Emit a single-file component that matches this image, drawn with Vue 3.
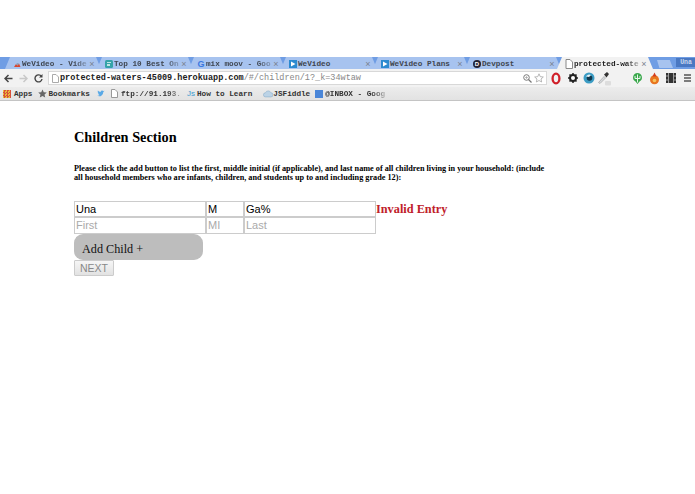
<script setup>
const tabs = [
  { title: 'WeVideo - Vide', icon: 'wv', fade: true },
  { title: 'Top 10 Best On', icon: 'top', fade: true },
  { title: 'mix moov - Goo', icon: 'g', fade: true },
  { title: 'WeVideo', icon: 'play', fade: false },
  { title: 'WeVideo Plans', icon: 'play', fade: false },
  { title: 'Devpost', icon: 'dev', fade: false },
]
</script>

<template>
  <div class="page">
    <header class="chrome">
      <div class="tabstrip">
        <div v-for="(t, i) in tabs" :key="i" class="tab">
          <svg v-if="t.icon === 'play'" class="fav" width="8" height="8" viewBox="0 0 8 8"><rect width="8" height="8" fill="#2c8ad0"/><path d="M2 1.500L6.500 4 2 6.500z" fill="#fff"/></svg>
          <svg v-else-if="t.icon === 'wv'" class="fav" width="8" height="8" viewBox="0 0 8 8"><path d="M1 7L3 4l1.500 1.500L6 3.500 7.500 7z" fill="#d9472f"/><path d="M3 4l1.500-1L6 3.500 4.500 5.500z" fill="#8aa0b8"/></svg>
          <svg v-else-if="t.icon === 'top'" class="fav" width="8" height="8" viewBox="0 0 8 8"><rect width="8" height="8" rx="1.500" fill="#35a3a8"/><path d="M2 2h4v1H2zM2 4h3v2H2z" fill="#bfe6e6"/></svg>
          <span v-else-if="t.icon === 'g'" class="fav g">G</span>
          <span v-else class="fav dev">D</span>
          <span class="tabtitle" :class="{ fade: t.fade }">{{ t.title }}</span>
          <span class="x">×</span>
        </div>
        <div class="tab active">
          <svg class="fav" width="8" height="10" viewBox="0 0 8 10"><path d="M1 .5h4l2.500 2.500v6.500H1z" fill="#fff" stroke="#888"/></svg>
          <span class="tabtitle fade">protected-wate</span>
          <span class="x">×</span>
        </div>
        <div class="newtab"></div>
        <div class="user">Una</div>
      </div>
      <div class="toolbar">
        <svg class="nav" width="9" height="9" viewBox="0 0 9 9"><path d="M8.500 4.500H1.500M4.500 1L1 4.500 4.500 8" fill="none" stroke="#444" stroke-width="1.500"/></svg>
        <svg class="nav" width="9" height="9" viewBox="0 0 9 9"><path d="M.5 4.500h7M4.500 1L8 4.500 4.500 8" fill="none" stroke="#c8c8c8" stroke-width="1.500"/></svg>
        <svg class="nav" width="9" height="9" viewBox="0 0 9 9"><path d="M7.500 2.500A3.500 3.500 0 1 0 8 5" fill="none" stroke="#444" stroke-width="1.400"/><path d="M8.500 0v3.500H5z" fill="#444"/></svg>
        <div class="omnibox">
          <svg width="7" height="9" viewBox="0 0 7 9"><path d="M.5.500h3.500L6.500 3v5.500H.5z" fill="#fff" stroke="#aaa"/></svg>
          <span class="url"><b>protected-waters-45009.herokuapp.com</b>/#/children/1?_k=34wtaw</span>
          <span class="grow"></span>
          <svg width="9" height="9" viewBox="0 0 9 9"><circle cx="3.500" cy="3.500" r="2.800" fill="none" stroke="#777"/><path d="M5.500 5.500L8.500 8.500" stroke="#777" stroke-width="1.300"/><path d="M2 3.500h3M3.500 2v3" stroke="#999" stroke-width=".6"/></svg>
          <svg class="star" width="10" height="10" viewBox="0 0 12 12"><path d="M6 1l1.500 3.400 3.700.4-2.800 2.400.8 3.600L6 9l-3.200 1.800.8-3.600L.8 4.800l3.700-.4z" fill="#fff" stroke="#aaa"/></svg>
        </div>
        <div class="exts">
          <svg class="e-opera" width="12" height="13" viewBox="0 0 12 13"><ellipse cx="6" cy="6.500" rx="3.400" ry="4.800" fill="none" stroke="#d0202a" stroke-width="2.300"/></svg>
          <svg class="e-gear" width="12" height="12" viewBox="0 0 12 12"><path d="M6 1v10M1 6h10M2.500 2.500l7 7M9.500 2.500l-7 7" stroke="#222" stroke-width="1.500"/><circle cx="6" cy="6" r="3" fill="#fff" stroke="#222" stroke-width="2"/></svg>
          <svg class="e-eye" width="12" height="12" viewBox="0 0 12 12"><circle cx="6" cy="6" r="5.500" fill="#3b9cc4"/><circle cx="6.500" cy="6" r="2.800" fill="#12384c"/><path d="M3 4.500a3.500 3.500 0 0 1 5-1.500l-2 2z" fill="#e6f4fa"/></svg>
          <svg class="e-drop" width="15" height="15" viewBox="0 0 15 15"><path d="M1.500 11.500L7 5.500l1.500 1.500-5.500 5.500z" fill="#d8dbde" stroke="#999" stroke-width=".6"/><path d="M7 3.500l3-2.500 2 2-2.500 3.500z" fill="#333"/><rect x="8" y="10" width="6" height="4.500" rx="1" fill="#ddd"/></svg>
          <svg class="e-green" width="11" height="13" viewBox="0 0 11 13"><path d="M5.500 1a4.500 4.500 0 0 1 2 8.500L5.500 12l-2-2.500A4.500 4.500 0 0 1 5.500 1z" fill="#3aa84c"/><path d="M5.500 2.500v8M3 4v2.500h5V4" fill="none" stroke="#e8f6ea"/></svg>
          <svg class="e-fire" width="11" height="13" viewBox="0 0 11 13"><circle cx="5.500" cy="7.800" r="4.500" fill="#e8741f"/><path d="M5.500 .5l2 4h-4z" fill="#d33a1c"/><circle cx="5.500" cy="8.500" r="1.800" fill="#f6c35a"/></svg>
          <svg class="e-film" width="12" height="12" viewBox="0 0 12 12"><rect x="1" y="1" width="10" height="10" fill="#333"/><path d="M3.500 1v10M8.500 1v10M1 4h2M1 8h2M9 4h2M9 8h2" stroke="#bbb" stroke-width=".8"/></svg>
          <svg class="e-menu" width="9" height="10" viewBox="0 0 9 10"><path d="M1 2h7M1 5h7M1 8h7" stroke="#555" stroke-width="1.300"/></svg>
        </div>
      </div>
      <div class="bookmarks">
        <i class="grid"></i><span class="b-apps">Apps</span>
        <svg class="b-star" width="9" height="9" viewBox="0 0 12 12"><path d="M6 .5l1.700 3.700 4 .4-3 2.700.9 4L6 9.200l-3.600 2.100.9-4-3-2.700 4-.4z" fill="#666"/></svg><span class="b-marks">Bookmarks</span>
        <svg class="b-tw" width="8" height="7" viewBox="0 0 10 9"><path d="M0 7.500c3 1.500 7.500.5 8-5l1.500-1.500-1.500.3C7 0 5 .3 4.800 2.300 3 2.300 1.700 1.200 1 .5.500 2 1 3 1.800 3.500L.8 3.300c.1 1 .7 1.700 1.700 2l-.9.100c.3.700 1 1 1.700 1.100C2.500 7.300 1.300 7.600 0 7.500z" fill="#5aa9e6"/></svg>
        <svg class="b-doc" width="7" height="9" viewBox="0 0 7 9"><path d="M.5.500h3.500L6.500 3v5.500H.5z" fill="#fff" stroke="#999"/></svg><span class="b-ftp fade">ftp://91.193.</span>
        <span class="js">Js</span><span class="b-how">How to Learn</span>
        <svg class="b-cloud" width="10" height="8" viewBox="0 0 12 9"><path d="M3 8a2.500 2.500 0 0 1 0-5 3.500 3.500 0 0 1 6.500 0 2.500 2.500 0 0 1 0 5z" fill="#bcd3e6" stroke="#7fa6c6" stroke-width=".6"/></svg><span class="b-fid">JSFiddle</span>
        <i class="mail"></i><span class="b-inbox fade">@INBOX - Goog</span>
      </div>
    </header>

    <main class="content">
      <h2>Children Section</h2>
      <h5>Please click the add button to list the first, middle initial (if applicable), and last name of all children living in your household: (include all household members who are infants, children, and students up to and including grade 12):</h5>
      <div class="row row-one">
        <input class="first" value="Una" />
        <input class="mi" value="M" />
        <input class="last" value="Ga%" />
        <span class="err">Invalid Entry</span>
      </div>
      <div class="row row-two">
        <input class="first" placeholder="First" />
        <input class="mi" placeholder="MI" />
        <input class="last" placeholder="Last" />
      </div>
      <button class="add">Add Child +</button>
      <button class="next">NEXT</button>
    </main>
  </div>
</template>

<style>
html, body { margin: 0; background: #fff; }
</style>

<style scoped>
.page { width: 695px; height: 494px; overflow: hidden; background: #fff; padding-top: 57px; box-sizing: border-box; }
.chrome { font-family: "Liberation Mono", monospace; font-weight: bold; color: #333; }
.tabstrip { height: 12px; background: #6f9de4; display: flex; padding-left: 5px; overflow: hidden; }
.tab { width: 96px; height: 12px; margin-right: -4px; box-sizing: border-box; padding: 1px 6px 0 8px; display: flex; align-items: center; gap: 1px; background: #a7c3ef; font-size: 7.700px; flex: none; color: #3f4650; clip-path: polygon(5px 0, calc(100% - 5px) 0, 100% 100%, 0 100%); }
.tab.active { background: #f2f2f2; color: #222; }
.tabtitle { flex: 1; white-space: nowrap; }
.fade { -webkit-mask-image: linear-gradient(to right, #000 78%, rgba(0,0,0,.25)); mask-image: linear-gradient(to right, #000 78%, rgba(0,0,0,.25)); }
.x { font-family: "Liberation Sans", sans-serif; font-size: 9px; color: #7a828e; font-weight: normal; width: 6px; text-align: center; }
.fav { width: 8px; height: 8px; flex: none; }
.active .fav { height: 10px; }
.g { font: bold 9px/8px "Liberation Sans", sans-serif; color: #3a78e0; text-align: center; }
.dev { font: bold 6px/8px "Liberation Sans", sans-serif; text-align: center; background: #223; color: #fff; border-radius: 50%; }
.newtab { width: 16px; height: 8px; margin: 3px 0 0 8px; background: #a7c3ef; flex: none; clip-path: polygon(0 0, 80% 0, 100% 100%, 15% 100%); }
.user { width: 20px; height: 9px; margin: 1px 0 0 3px; background: #4a78c2; color: #c9d8ef; font-size: 6.500px; line-height: 9px; text-align: center; flex: none; }
.toolbar { height: 18px; background: #f2f2f2; display: flex; align-items: center; padding-left: 4px; }
.nav { margin-right: 6px; flex: none; }
.omnibox { width: 499px; height: 14px; margin-left: -1px; background: #fff; border: 1px solid #d8d8d8; box-sizing: border-box; display: flex; align-items: center; padding: 0 2px 0 3px; flex: none; }
.url { font-size: 8.500px; font-weight: normal; color: #888; margin-left: 1px; white-space: nowrap; }
.url b { color: #222; }
.grow { flex: 1; }
.star { margin-left: 2px; }
.exts { display: flex; align-items: center; flex: 1; margin-left: 3px; }
.e-gear { margin-left: 5px; }
.e-eye { margin-left: 4px; }
.e-drop { margin-left: 2px; }
.e-green { margin-left: 20px; }
.e-fire { margin-left: 6px; }
.e-film { margin-left: 5px; }
.e-menu { margin-left: 6px; }
.bookmarks { height: 13px; background: linear-gradient(#ececec, #e2e2e2); border-bottom: 1px solid #c4c4c4; display: flex; align-items: center; padding-left: 3px; font-size: 7.700px; white-space: nowrap; }
.grid { width: 8px; height: 8px; flex: none; background: repeating-conic-gradient(#d8503a 0 25%, #e8b93a 0 50%) 0 0 / 3px 3px; }
.b-apps { margin-left: 3px; }
.b-star { margin-left: 6px; }
.b-marks { margin-left: 1px; }
.b-tw { margin-left: 7px; }
.b-doc { margin-left: 6px; }
.b-ftp { margin-left: 3px; }
.js { margin-left: 6px; color: #3a9ad0; font-family: "Liberation Sans", sans-serif; font-size: 8px; font-weight: normal; }
.b-how { margin-left: 2px; }
.b-cloud { margin-left: 11px; }
.b-fid { margin-left: 0; }
.mail { width: 8px; height: 8px; margin-left: 5px; background: #4a86d8; flex: none; }
.b-inbox { margin-left: 2px; }
.content { padding: 28px 0 0 74px; font-family: "Liberation Serif", serif; color: #000; }
h2 { margin: 0; font-size: 14.300px; line-height: 17px; font-weight: bold; }
h5 { margin: 18px 0 0; width: 472px; font-size: 8.220px; line-height: 9.300px; font-weight: bold; }
.row { display: flex; align-items: center; }
.row-one { height: 16px; margin-top: 18px; }
.row-two { height: 17px; }
input { box-sizing: border-box; height: 100%; border: 1px solid #ccc; padding: 0 1px; margin: 0; font: 11px "Liberation Sans", sans-serif; color: #000; outline: none; background: #fff; flex: none; }
input::placeholder { color: #aaa; }
.first { width: 132px; }
.mi { width: 38px; }
.last { width: 132px; }
.err { color: #c0202a; font-size: 12.300px; font-weight: bold; line-height: 16px; }
.add { display: block; box-sizing: border-box; width: 129px; height: 26px; margin: 0; padding: 6px 0 0 8px; border: 0; border-radius: 9px; background: #bdbdbd; font: 12.200px "Liberation Serif", serif; color: #111; text-align: left; }
.next { display: block; box-sizing: border-box; width: 40px; height: 16px; margin: 0; padding: 0; border: 1px solid #ccc; border-radius: 1px; background: linear-gradient(#f6f6f6, #e2e2e2); font: 10.500px "Liberation Sans", sans-serif; color: #888; }
</style>
